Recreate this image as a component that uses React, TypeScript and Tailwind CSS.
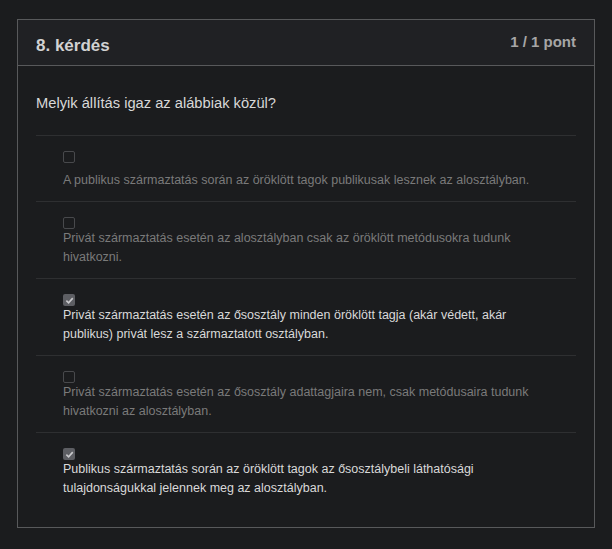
import React from 'react'

const options = [
  {
    text: 'A publikus származtatás során az öröklött tagok publikusak lesznek az alosztályban.',
    checked: false,
    gap: 'mt-[7.5px]',
  },
  {
    text: 'Privát származtatás esetén az alosztályban csak az öröklött metódusokra tudunk hivatkozni.',
    checked: false,
    gap: '',
  },
  {
    text: 'Privát származtatás esetén az ősosztály minden öröklött tagja (akár védett, akár publikus) privát lesz a származtatott osztályban.',
    checked: true,
    gap: '',
  },
  {
    text: 'Privát származtatás esetén az ősosztály adattagjaira nem, csak metódusaira tudunk hivatkozni az alosztályban.',
    checked: false,
    gap: '',
  },
  {
    text: 'Publikus származtatás során az öröklött tagok az ősosztálybeli láthatósági tulajdonságukkal jelennek meg az alosztályban.',
    checked: true,
    gap: '',
  },
]

const Checkbox = ({ checked }: { checked: boolean }) =>
  checked ? (
    <div className="flex h-3 w-3 items-center justify-center rounded-[2px] bg-[#5d5e63]">
      <svg width="9" height="9" viewBox="0 0 10 10" fill="none">
        <path d="M1.5 5.2 L4 7.6 L8.6 2.4" stroke="#c9c9cc" strokeWidth="1.8" />
      </svg>
    </div>
  ) : (
    <div className="h-3 w-3 rounded-[2px] border border-[#48494c]" />
  )

export default function App() {
  return (
    <div className="min-h-[549px] bg-[#1b1c1e] pt-[19px] pl-[17px] font-['Liberation_Sans',Arial,sans-serif]">
      <div className="w-[578px] border border-[#58595b]">
        <div className="flex h-[46px] items-start justify-between border-b border-[#58595b] bg-[#202124] px-[18px]">
          <span className="mt-[16px] text-[17px] leading-[19px] font-bold text-[#d2d2d2]">8. kérdés</span>
          <span className="mt-[13px] text-[15px] leading-[17px] font-bold text-[#a6a6a6]">1 / 1 pont</span>
        </div>
        <div className="px-[18px] pt-[27px] pb-[18px]">
          <div className="mb-[22px] text-[14.7px] leading-5 text-[#d8d8d8]">
            Melyik állítás igaz az alábbiak közül?
          </div>
          {options.map((o, i) => (
            <div key={i} className="border-t border-[#2e2f31] pt-[15px] pr-[28px] pb-3 pl-[27px]">
              <Checkbox checked={o.checked} />
              <div
                className={`${o.gap} text-[12.5px] leading-[18.5px] ${o.checked ? 'text-[#d9d9d9]' : 'text-[#7a7a7a]'}`}
              >
                {o.text}
              </div>
            </div>
          ))}
        </div>
      </div>
    </div>
  )
}
